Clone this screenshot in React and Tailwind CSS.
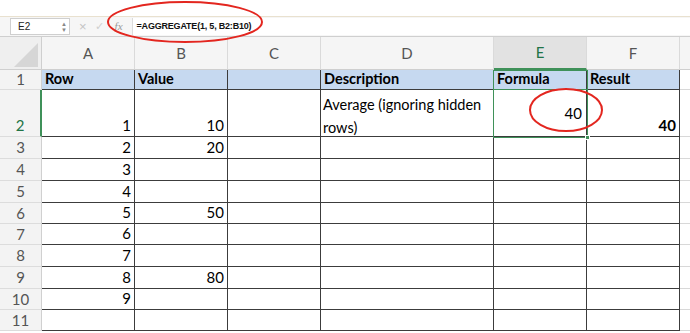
import React from 'react';

const font = { fontFamily: 'Lato, "Open Sans", Arial, sans-serif' };

const cols = ['A', 'B', 'C', 'D', 'E', 'F'];

const rows = [
  { n: 1, cells: ['Row', 'Value', '', 'Description', 'Formula', 'Result'], head: true },
  { n: 2, cells: ['1', '10', '', '', '40', '40'] },
  { n: 3, cells: ['2', '20', '', '', '', ''] },
  { n: 4, cells: ['3', '', '', '', '', ''] },
  { n: 5, cells: ['4', '', '', '', '', ''] },
  { n: 6, cells: ['5', '50', '', '', '', ''] },
  { n: 7, cells: ['6', '', '', '', '', ''] },
  { n: 8, cells: ['7', '', '', '', '', ''] },
  { n: 9, cells: ['8', '80', '', '', '', ''] },
  { n: 10, cells: ['9', '', '', '', '', ''] },
  { n: 11, cells: ['', '', '', '', '', ''] },
];

const Cell = ({ row, ci, value }) => {
  if (row.head) {
    return (
      <div className="bg-[#c6d9f0] border-r border-b border-[#3c3c3c] flex items-center px-[3px] text-[14.5px] font-bold text-black leading-none">
        {value}
      </div>
    );
  }
  // D2 wrapped description
  if (row.n === 2 && ci === 3) {
    return (
      <div className="bg-white border-r border-b border-[#3c3c3c] px-[2px] pt-[3px] text-[14.5px] leading-[23px] text-black">
        Average (ignoring hidden rows)
      </div>
    );
  }
  const centered = row.n === 2 && ci === 4;
  const bold = row.n === 2 && ci === 5;
  return (
    <div
      className={`bg-white border-r border-b border-[#3c3c3c] flex justify-end px-[3px] text-[15px] leading-none text-black ${centered ? 'items-center pr-[4px]' : 'items-end pb-[3px]'} ${bold ? 'font-bold' : ''}`}
    >
      {value}
    </div>
  );
};

export default function App() {
  return (
    <div className="relative w-[690px] h-[333px] overflow-hidden bg-white text-black" style={font}>
      {/* top blank strip */}
      <div className="h-[17px] bg-white border-b border-[#e9e1cf]" />

      {/* formula bar */}
      <div className="h-[20px] flex items-center bg-[#f6f6f6] border-b border-[#cfcfcf] text-[10px]" style={{ fontFamily: 'Arial, "Liberation Sans", sans-serif' }}>
        <div className="ml-[10px] w-[60px] h-[17px] bg-white border border-[#cfcfcf] flex items-center justify-between pl-[7px] pr-[2px]">
          <span className="text-[#222]">E2</span>
          <span className="flex flex-col text-[6px] leading-[6px] text-[#888]">
            <span>▲</span>
            <span>▼</span>
          </span>
        </div>
        <span className="ml-[9px] text-[13px] text-[#c4c4c4] leading-none">×</span>
        <span className="ml-[8px] text-[11px] text-[#cfcfcf] leading-none">✓</span>
        <span className="ml-[11px] text-[11px] italic text-[#999]" style={{ fontFamily: '"Liberation Serif", serif' }}>fx</span>
        <div className="ml-[9px] flex-1 h-[17px] bg-white border-l border-[#dcdcdc] flex items-center pl-[4px] text-[9px] font-semibold tracking-[-0.2px] text-[#111]">
          =AGGREGATE(1, 5, B2:B10)
        </div>
      </div>

      {/* sheet grid */}
      <div className="grid grid-cols-[42px_93px_93px_93px_173px_93px_93px_1fr] grid-rows-[33px_20px_47px_22px_22px_22px_21px_21px_22px_22px_21px_21px_1fr] h-[296px]">
        {/* column header row */}
        <div className="bg-[#efefef] border-r border-b border-[#cfcfcf] relative overflow-hidden">
          <svg width="42" height="33" className="absolute inset-0">
            <polygon points="38,6 38,30 14,30" fill="#d6d6d6" />
          </svg>
        </div>
        {cols.map((c) => (
          <div
            key={c}
            className={`flex items-center justify-center text-[15px] leading-none border-r border-[#dadada] ${c === 'E' ? 'bg-[#e2e2e2] text-[#217346] border-b-2 border-b-[#3f9159]' : 'bg-[#f5f5f5] text-[#555] border-b border-b-[#cfcfcf]'}`}
          >
            {c}
          </div>
        ))}
        <div className="bg-[#f5f5f5] border-b border-[#cfcfcf]" />

        {rows.map((row) => (
          <React.Fragment key={row.n}>
            <div
              className={`bg-[#f3f3f3] border-b border-[#dcdcdc] flex justify-center text-[15px] leading-none ${row.n === 2 ? 'text-[#217346] border-r-2 border-r-[#3f9159] items-end pb-[3px]' : 'text-[#555] border-r border-r-[#d0d0d0] items-center'}`}
            >
              {row.n}
            </div>
            {row.cells.map((v, ci) => (
              <Cell key={ci} row={row} ci={ci} value={v} />
            ))}
            <div className="bg-white border-b border-[#d8d8d8]" />
          </React.Fragment>
        ))}
      </div>

      {/* selection outline E1:E2 */}
      <div className="absolute left-[493px] top-[70px] w-[95px] h-[68px] border-[1.5px] border-[#3f9159] pointer-events-none" />
      <div className="absolute left-[493px] top-[89px] w-[95px] h-0 border-t-[1.5px] border-[#3f9159] pointer-events-none" />
      <div className="absolute left-[585px] top-[135px] w-[5px] h-[5px] bg-[#3f9159] border border-white pointer-events-none" />

      {/* red annotation ellipses */}
      <svg className="absolute inset-0 pointer-events-none" width="690" height="333">
        <ellipse cx="185" cy="22" rx="77" ry="20" fill="none" stroke="#e3261f" strokeWidth="2" />
        <ellipse cx="566" cy="110" rx="36" ry="21" fill="none" stroke="#e3261f" strokeWidth="2" />
      </svg>
    </div>
  );
}
